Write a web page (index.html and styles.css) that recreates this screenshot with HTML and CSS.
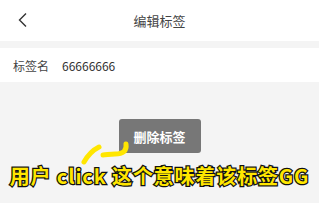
FILE: index.html
```html
<!DOCTYPE html>
<html lang="zh">
<head>
  <meta charset="UTF-8">
  <meta name="viewport" content="width=device-width, initial-scale=1.0">
  <title>编辑标签</title>
  <link rel="stylesheet" href="styles.css">
</head>
<body>
  <!-- 顶部导航 -->
  <div class="header">
    <svg class="back" width="12" height="16" viewBox="0 0 12 16">
      <path d="M9 1.5 L2.5 8 L9 14.5" fill="none" stroke="#333" stroke-width="1.4"/>
    </svg>
    <div class="title">编辑标签</div>
  </div>

  <!-- 标签名 -->
  <div class="row">
    <span class="label">标签名</span>
    <span class="value">66666666</span>
  </div>

  <div class="content">
    <button class="delete">删除标签</button>
    <div class="caption">用户 click 这个意味着该标签GG</div>
    <svg class="scribble" width="60" height="32" viewBox="0 0 60 32">
      <path d="M47 3 C48 10 44 13 36 13 C31 13 27 14 24 14" fill="none" stroke="#ffe600" stroke-width="5" stroke-linecap="round"/>
      <path d="M20 6 C14 9 9 14 5 21" fill="none" stroke="#ffe600" stroke-width="5" stroke-linecap="round"/>
    </svg>
  </div>
</body>
</html>
```

FILE: styles.css
```css
body, html {
  margin: 0;
  height: 100%;
  background: #f4f4f4;
  font-family: "Noto Sans CJK SC", "Noto Sans", sans-serif;
}

.header {
  height: 41px;
  background: #fff;
  display: flex;
  align-items: center;
  justify-content: center;
  position: relative;
}

.back {
  position: absolute;
  left: 17px;
  top: 12px;
}

.title {
  font-size: 13px;
  color: #444;
}

.row {
  margin-top: 7px;
  height: 34px;
  background: #fff;
  display: flex;
  align-items: center;
  padding-left: 13px;
  font-size: 12px;
  color: #444;
}

.label {
  width: 49px;
}

.value {
  color: #333;
}

.content {
  position: relative;
  display: flex;
  flex-direction: column;
  align-items: center;
  padding-top: 37px;
}

.delete {
  width: 82px;
  height: 34px;
  border: none;
  border-radius: 3px;
  background: #777;
  color: #fff;
  font-family: inherit;
  font-size: 13px;
  font-weight: bold;
  padding: 0;
}

.caption {
  margin-top: 12px;
  font-size: 20px;
  font-weight: bold;
  line-height: 22px;
  letter-spacing: 0.85px;
  color: #ffe600;
  -webkit-text-stroke: 2.5px #111;
  paint-order: stroke fill;
  white-space: nowrap;
}

.scribble {
  position: absolute;
  left: 79px;
  top: 59px;
}
```
